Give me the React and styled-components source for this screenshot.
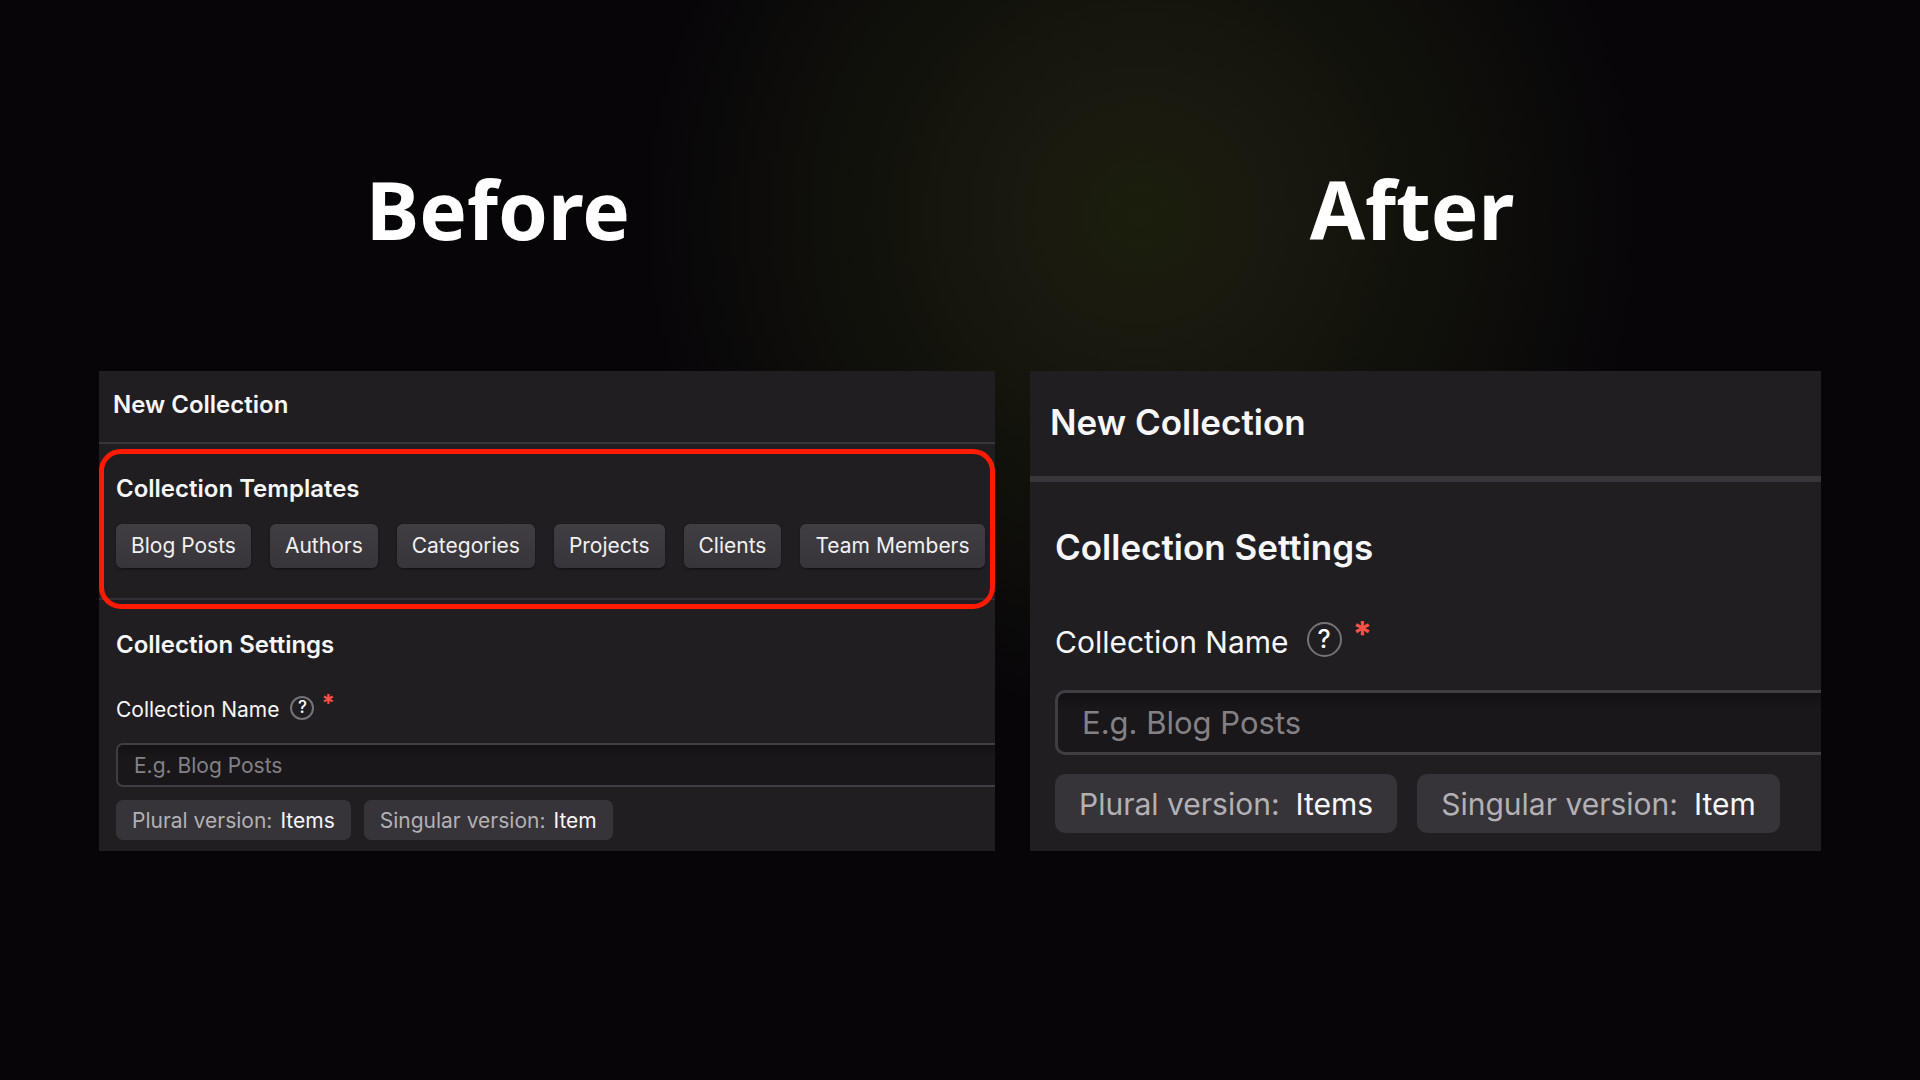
import React from 'react';
import styled, { createGlobalStyle, ThemeProvider } from 'styled-components';

const GlobalStyle = createGlobalStyle`
  * {
    box-sizing: border-box;
  }
  body {
    margin: 0;
    background: #070508;
    font-family: Inter, sans-serif;
  }
`;

// the same form is shown at two zoom levels
const compact = {
  title: 24,
  text: 21,
  placeholder: 21,
  line: 32,
  rule: 2,
  header: '18px 14px 21px',
  section: '29px 0 11px 17px',
  labelTop: 33,
  inputTop: 17,
  tagsTop: 13,
  labelGap: 11,
  asteriskGap: 7,
  asterisk: 24,
  help: 24,
  helpText: 17,
  border: 2,
  inputHeight: 44,
  inputPadding: 16,
  radius: 7,
  tagHeight: 40,
  tagPadding: 16,
  tagGap: 13,
  tagInner: 8
};

const large = {
  title: 35,
  text: 30,
  placeholder: 31,
  line: 44,
  rule: 6,
  header: '29px 20px 32px',
  section: '43px 0 18px 25px',
  labelTop: 51,
  inputTop: 26,
  tagsTop: 19,
  labelGap: 18,
  asteriskGap: 11,
  asterisk: 35,
  help: 35,
  helpText: 25,
  border: 3,
  inputHeight: 65,
  inputPadding: 24,
  radius: 10,
  tagHeight: 59,
  tagPadding: 24,
  tagGap: 20,
  tagInner: 16
};

const Page = styled.main`
  min-height: 100vh;
  padding-top: 155px;
  background: radial-gradient(
    circle at 1141px 216px,
    #1b1e0c 0,
    #19180f 140px,
    #12120c 260px,
    #0c0b0a 400px,
    #070508 500px
  );
`;

const Titles = styled.div`
  display: grid;
  grid-template-columns: 1fr 1fr;
  padding: 0 51px 0 41px;
  margin-bottom: 108px;
`;

const Title = styled.h1`
  margin: 0;
  font-family: 'Noto Sans', sans-serif;
  font-size: 80px;
  font-weight: 700;
  line-height: 108px;
  text-align: center;
  color: #fff;
`;

const Panels = styled.div`
  display: grid;
  grid-template-columns: 896fr 791fr;
  gap: 35px;
  padding: 0 99px;
`;

const Panel = styled.section`
  min-width: 0;
  background: #201e21;
  color: #f7f6f8;
`;

const PanelHeader = styled.header`
  padding: ${({ theme }) => theme.header};
  border-bottom: ${({ theme }) => theme.rule}px solid #38363a;
`;

const Heading = styled.h2`
  margin: 0;
  font-size: ${({ theme }) => theme.title}px;
  font-weight: 600;
  line-height: ${({ theme }) => theme.line}px;
`;

const Templates = styled.div`
  position: relative;
  padding: 29px 10px 30px 17px;
  border-bottom: 2px solid #323034;
`;

const TemplateList = styled.div`
  display: flex;
  gap: 19px;
  margin-top: 19px;
`;

const TemplateButton = styled.button`
  height: 44px;
  padding: 0 15px;
  border: 0;
  border-radius: 6px;
  background: linear-gradient(#403e42, #373539);
  box-shadow: 0 1px 2px #121013;
  font: 400 21px/32px Inter, sans-serif;
  color: #f1f0f2;
  white-space: nowrap;
`;

const Highlight = styled.div`
  position: absolute;
  inset: 5px 0 -11px;
  border: 5px solid #ff1a00;
  border-radius: 22px;
  pointer-events: none;
`;

const Settings = styled.div`
  padding: ${({ theme }) => theme.section};
`;

const LabelRow = styled.div`
  display: flex;
  align-items: center;
  height: ${({ theme }) => theme.line}px;
  margin-top: ${({ theme }) => theme.labelTop}px;
`;

const Label = styled.label`
  font-size: ${({ theme }) => theme.text}px;
  line-height: ${({ theme }) => theme.line}px;
`;

const HelpButton = styled.button`
  display: flex;
  align-items: center;
  justify-content: center;
  width: ${({ theme }) => theme.help}px;
  height: ${({ theme }) => theme.help}px;
  margin: 0 ${({ theme }) => theme.asteriskGap}px 5px ${({ theme }) => theme.labelGap}px;
  padding: 0;
  border: 2px solid #757377;
  border-radius: 50%;
  background: none;
  font: 500 ${({ theme }) => theme.helpText}px/1 Inter, sans-serif;
  color: #fff;
`;

const Required = styled.span`
  align-self: flex-start;
  font-size: ${({ theme }) => theme.asterisk}px;
  font-weight: 700;
  line-height: 0.8;
  color: #ff5148;
`;

const Input = styled.input`
  display: block;
  width: 100%;
  height: ${({ theme }) => theme.inputHeight}px;
  margin-top: ${({ theme }) => theme.inputTop}px;
  padding: 0 ${({ theme }) => theme.inputPadding}px;
  border: ${({ theme }) => theme.border}px solid #403e42;
  border-right: 0;
  border-radius: ${({ theme }) => theme.radius}px 0 0 ${({ theme }) => theme.radius}px;
  background: linear-gradient(#131114, #19171a 30%);
  font-family: Inter, sans-serif;
  font-size: ${({ theme }) => theme.placeholder}px;
  color: #f7f6f8;
  &::placeholder {
    color: #838185;
    opacity: 1;
  }
`;

const Tags = styled.div`
  display: flex;
  gap: ${({ theme }) => theme.tagGap}px;
  margin-top: ${({ theme }) => theme.tagsTop}px;
`;

const Tag = styled.div`
  display: flex;
  align-items: center;
  gap: ${({ theme }) => theme.tagInner}px;
  height: ${({ theme }) => theme.tagHeight}px;
  padding: 0 ${({ theme }) => theme.tagPadding}px;
  border-radius: ${({ theme }) => theme.radius}px;
  background: #363438;
  font-size: ${({ theme }) => theme.text}px;
  white-space: nowrap;
`;

const TagName = styled.span`
  color: #b3b1b5;
`;

const templates = ['Blog Posts', 'Authors', 'Categories', 'Projects', 'Clients', 'Team Members'];

const CollectionSettings = ({ id }) => (
  <Settings>
    <Heading as="h3">Collection Settings</Heading>
    <LabelRow>
      <Label htmlFor={id}>Collection Name</Label>
      <HelpButton type="button">?</HelpButton>
      <Required>*</Required>
    </LabelRow>
    <Input id={id} type="text" placeholder="E.g. Blog Posts" />
    <Tags>
      <Tag>
        <TagName>Plural version:</TagName>
        <span>Items</span>
      </Tag>
      <Tag>
        <TagName>Singular version:</TagName>
        <span>Item</span>
      </Tag>
    </Tags>
  </Settings>
);

const App = () => {
  return (
    <Page>
      <GlobalStyle />
      <Titles>
        <Title>Before</Title>
        <Title>After</Title>
      </Titles>
      <Panels>
        <ThemeProvider theme={compact}>
          <Panel>
            <PanelHeader>
              <Heading>New Collection</Heading>
            </PanelHeader>
            <Templates>
              <Heading as="h3">Collection Templates</Heading>
              <TemplateList>
                {templates.map(name => (
                  <TemplateButton key={name} type="button">
                    {name}
                  </TemplateButton>
                ))}
              </TemplateList>
              <Highlight />
            </Templates>
            <CollectionSettings id="name-before" />
          </Panel>
        </ThemeProvider>
        <ThemeProvider theme={large}>
          <Panel>
            <PanelHeader>
              <Heading>New Collection</Heading>
            </PanelHeader>
            <CollectionSettings id="name-after" />
          </Panel>
        </ThemeProvider>
      </Panels>
    </Page>
  );
};

export default App;
